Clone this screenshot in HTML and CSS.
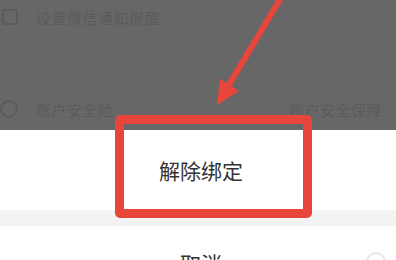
FILE: index.html
```html
<!DOCTYPE html>
<html lang="zh-CN">
<head>
  <meta charset="UTF-8">
  <meta name="viewport" content="width=device-width, initial-scale=1.0">
  <link rel="stylesheet" href="styles.css">
</head>
<body>

  <div class="screen">
    <div class="mask">
      <div class="row row-top">
        <span class="ico ico-square"></span>
        <span class="faint">设置微信通知提醒</span>
      </div>
      <div class="row row-bottom">
        <span class="ico ico-circle"></span>
        <span class="faint">账户安全险</span>
        <span class="faint right">账户安全保障</span>
      </div>
    </div>

    <div class="sheet">
      <div class="option">解除绑定</div>
      <div class="gap"></div>
      <div class="option cancel">
        取消
        <span class="corner"></span>
      </div>
    </div>

    <!-- annotation drawn on top of the screenshot -->
    <div class="mark-box"></div>
    <svg class="mark-arrow" width="396" height="260" viewBox="0 0 396 260">
      <line x1="282" y1="-4" x2="227" y2="88" stroke="#e8463b" stroke-width="6" stroke-linecap="round"/>
      <polygon points="217,105 220,79 239,91" fill="#e8463b"/>
    </svg>
  </div>

</body>
</html>
```

FILE: styles.css
```css
body {
  margin: 0;
  font-family: "Noto Sans CJK SC", "Noto Sans", sans-serif;
  background-color: #fff;
}

.screen {
  position: relative;
  width: 396px;
  height: 260px;
  overflow: hidden;
}

.mask {
  height: 130px;
  background-color: #676767;
  display: flex;
  flex-direction: column;
  justify-content: space-between;
  padding: 6px 0 10px;
  box-sizing: border-box;
}

.row {
  display: flex;
  align-items: center;
  height: 22px;
}

.ico {
  width: 16px;
  height: 16px;
  margin-left: 2px;
  margin-right: 18px;
  border: 2px solid #5b5b5b;
  box-sizing: border-box;
}

.ico-square {
  border-radius: 3px;
}

.ico-circle {
  border-radius: 50%;
  margin-left: 0;
  width: 18px;
  height: 18px;
}

.faint {
  color: #5b5b5b;
  font-size: 15px;
  letter-spacing: 0.5px;
}

.right {
  margin-left: auto;
  margin-right: 14px;
}

.sheet {
  display: flex;
  flex-direction: column;
}

.option {
  height: 80px;
  display: flex;
  align-items: center;
  justify-content: center;
  font-size: 21px;
  color: #333;
  padding-left: 6px;
  background-color: #fff;
}

.gap {
  height: 16px;
  background-color: #f3f3f3;
}

.cancel {
  position: relative;
  align-items: flex-start;
  padding-top: 22px;
  box-sizing: border-box;
}

.corner {
  position: absolute;
  right: 10px;
  top: 26px;
  width: 16px;
  height: 16px;
  border: 2px solid #e6e6e6;
  border-radius: 50%;
}

.mark-box {
  position: absolute;
  left: 115px;
  top: 115px;
  width: 197px;
  height: 103px;
  border: 9px solid #e8463b;
  border-radius: 5px;
  box-sizing: border-box;
}

.mark-arrow {
  position: absolute;
  left: 0;
  top: 0;
}
```
